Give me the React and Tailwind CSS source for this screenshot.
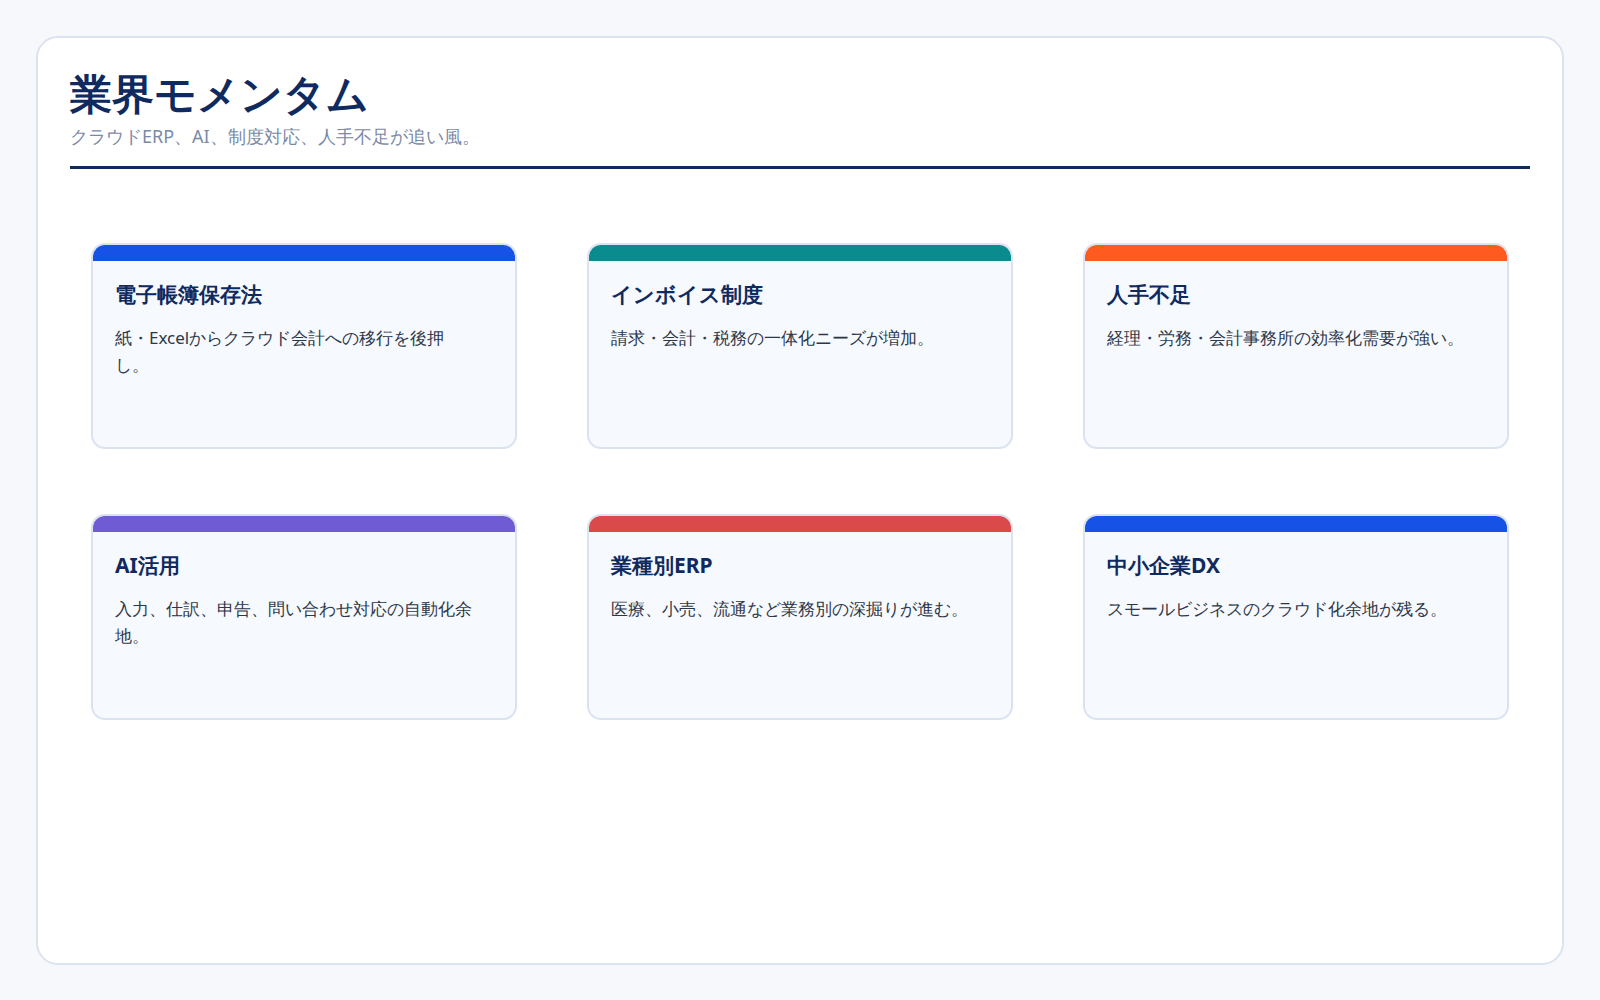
const cards = [
  { title: '電子帳簿保存法', body: '紙・Excelからクラウド会計への移行を後押し。', bar: 'bg-[#1652e6]' },
  { title: 'インボイス制度', body: '請求・会計・税務の一体化ニーズが増加。', bar: 'bg-[#0a8c8f]' },
  { title: '人手不足', body: '経理・労務・会計事務所の効率化需要が強い。', bar: 'bg-[#ff5a1f]' },
  { title: 'AI活用', body: '入力、仕訳、申告、問い合わせ対応の自動化余地。', bar: 'bg-[#6f5bd3]' },
  { title: '業種別ERP', body: '医療、小売、流通など業務別の深掘りが進む。', bar: 'bg-[#da4a4a]' },
  { title: '中小企業DX', body: 'スモールビジネスのクラウド化余地が残る。', bar: 'bg-[#1652e6]' },
]

export default function App() {
  return (
    <div className="min-h-[1000px] bg-[#f6f8fc] p-[36px] font-['Noto_Sans_CJK_JP','Noto_Sans',sans-serif]">
      <div className="h-[929px] rounded-[22px] border-2 border-[#dbe3f0] bg-white px-[32px] pt-[28px]">
        <h1 className="text-[42px] font-bold leading-[1.3] text-[#0f2a5e]">業界モメンタム</h1>
        <p className="mt-[2px] text-[18px] text-[#7a8aa6]">クラウドERP、AI、制度対応、人手不足が追い風。</p>
        <div className="mt-[16px] h-[3px] bg-[#0f2a5e]" />
        <div className="mt-[74px] grid grid-cols-3 gap-x-[70px] gap-y-[65px] px-[21px]">
          {cards.map(c => (
            <div key={c.title} className="h-[206px] overflow-hidden rounded-[14px] border-2 border-[#dbe3f0] bg-[#f6f9fe]">
              <div className={`-mx-[2px] -mt-[2px] h-[18px] rounded-t-[10px] ${c.bar}`} />
              <div className="px-[22px] pt-[18px]">
                <div className="text-[21px] font-bold text-[#0f2a5e]">{c.title}</div>
                <div className="mt-[14px] pr-[20px] text-[17px] leading-[1.6] text-[#2d3748]">{c.body}</div>
              </div>
            </div>
          ))}
        </div>
      </div>
    </div>
  )
}
